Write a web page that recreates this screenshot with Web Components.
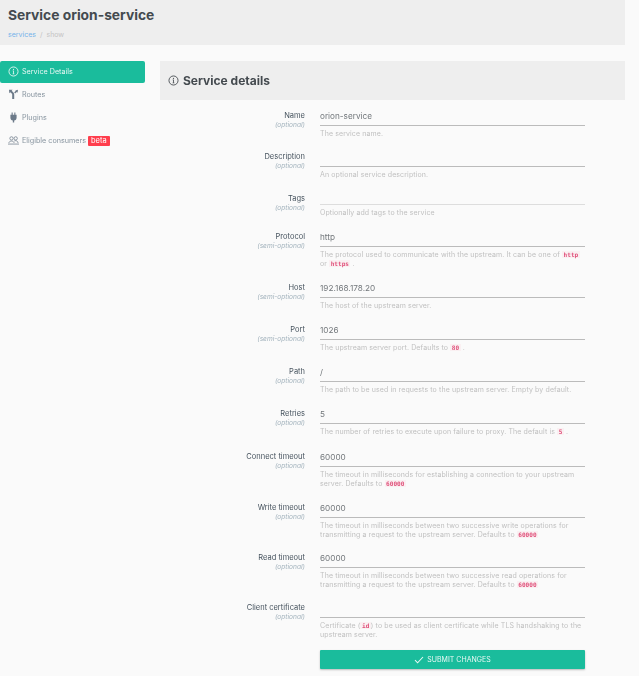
<!DOCTYPE html>
<html>
<head>
<meta charset="utf-8">
<style>
  html, body { margin: 0; padding: 0; height: 676px; overflow: hidden; background: #fafafa; }
  body { font-family: "Inter", "Open Sans", sans-serif; }
</style>
</head>
<body>
<svc-page></svc-page>
<script>
const FIELDS = [
  { label: 'Name', hint: 'optional', value: 'orion-service', help: 'The service name.', h: 41 },
  { label: 'Description', hint: 'optional', value: '', help: 'An optional service description.', h: 42 },
  { label: 'Tags', hint: 'optional', value: '', help: 'Optionally add tags to the service', h: 38, short: true },
  { label: 'Protocol', hint: 'semi-optional', value: 'http', help: 'The protocol used to communicate with the upstream. It can be one of <code>http</code> or <code>https</code> .', h: 51 },
  { label: 'Host', hint: 'semi-optional', value: '192.168.178.20', help: 'The host of the upstream server.', h: 42 },
  { label: 'Port', hint: 'semi-optional', value: '1026', help: 'The upstream server port. Defaults to <code>80</code> .', h: 42 },
  { label: 'Path', hint: 'optional', value: '/', help: 'The path to be used in requests to the upstream server. Empty by default.', h: 42 },
  { label: 'Retries', hint: 'optional', value: '5', help: 'The number of retries to execute upon failure to proxy. The default is <code>5</code> .', h: 43 },
  { label: 'Connect timeout', hint: 'optional', value: '60000', help: 'The timeout in milliseconds for establishing a connection to your upstream server. Defaults to <code>60000</code>', h: 51 },
  { label: 'Write timeout', hint: 'optional', value: '60000', help: 'The timeout in milliseconds between two successive write operations for transmitting a request to the upstream server. Defaults to <code>60000</code>', h: 50 },
  { label: 'Read timeout', hint: 'optional', value: '60000', help: 'The timeout in milliseconds between two successive read operations for transmitting a request to the upstream server. Defaults to <code>60000</code>', h: 50 },
  { label: 'Client certificate', hint: 'optional', value: '', help: 'Certificate (<code>id</code>) to be used as client certificate while TLS handshaking to the upstream server.', h: 52 },
];

const INFO = '<svg width="100%" height="100%" viewBox="0 0 16 16" fill="none" stroke="currentColor"><circle cx="8" cy="8" r="6.6" stroke-width="1.3"/><path d="M8 7v4.4M6.8 11.4h2.4M6.9 7H8" stroke-width="1.2"/><circle cx="8" cy="4.8" r=".9" fill="currentColor" stroke="none"/></svg>';

class SvcHeader extends HTMLElement {
  constructor() {
    super();
    this.attachShadow({ mode: 'open' });
    this.shadowRoot.innerHTML = `
      <style>
        :host { display: block; width: 625px; height: 45px; background: #eeeeee; padding: 7px 0 0 8px; box-sizing: border-box; }
        h1 { margin: 0; font-size: 13.8px; line-height: 16px; font-weight: 700; color: #444a4f; }
        .crumbs { margin-top: 7px; font-size: 7px; line-height: 10px; color: #c4c4c4; }
        .crumbs a { color: #74b3ea; }
        .crumbs i { font-style: normal; margin: 0 4px; }
      </style>
      <h1><slot></slot></h1>
      <div class="crumbs"><a>services</a><i>/</i>show</div>
    `;
  }
}

class SvcNavItem extends HTMLElement {
  constructor() {
    super();
    this.attachShadow({ mode: 'open' });
    this.shadowRoot.innerHTML = `
      <style>
        :host { display: flex; align-items: center; height: 22px; box-sizing: border-box; padding: 0 0 1px 8px; margin-bottom: 1px; font-size: 7.2px; color: #87949f; border-radius: 2px; }
        :host([active]) { background: #1abc9c; color: #e8f8f4; }
        .ic { width: 11px; height: 11px; margin-right: 3px; display: flex; }
        .badge { background: #ff3e4d; color: #fff; border-radius: 1px; padding: 0 3px; margin-left: 2px; line-height: 10px; height: 10px; font-size: 7.5px; }
        .badge:empty { display: none; }
      </style>
      <span class="ic"><slot name="icon"></slot></span>
      <slot></slot>
      <span class="badge">${this.getAttribute('badge') || ''}</span>
    `;
  }
}

class SvcSidebar extends HTMLElement {
  constructor() {
    super();
    this.attachShadow({ mode: 'open' });
    this.shadowRoot.innerHTML = `
      <style>
        :host { display: block; width: 145px; flex: none; }
      </style>
      <slot></slot>
    `;
  }
}

class SvcField extends HTMLElement {
  connectedCallback() {
    if (this.shadowRoot) return;
    this.attachShadow({ mode: 'open' });
    const f = this.field;
    this.shadowRoot.innerHTML = `
      <style>
        :host { display: flex; height: ${f.h}px; }
        .left { width: 145px; text-align: right; padding-top: 5px; }
        .label { font-size: 7.5px; line-height: 10px; color: #46535e; }
        .hint { font-size: 6.6px; line-height: 9px; color: #a3b3bd; font-style: italic; }
        .right { width: 265px; margin-left: 15px; }
        .input { height: ${f.short ? 16 : 20}px; box-sizing: border-box; border-bottom: 1px solid ${f.short ? '#dddddd' : '#bbbbbb'}; padding-top: 5px; font-size: 8.2px; line-height: 10px; color: #72777b; }
        .help { margin-top: 3px; font-size: 7px; letter-spacing: .11px; line-height: 9px; color: #c0c0c0; }
        code { font-family: "DejaVu Sans Mono", monospace; font-size: 6.1px; letter-spacing: 0; color: #e0507a; background: #faf0f2; padding: 0 1.5px; font-weight: 700; }
      </style>
      <div class="left">
        <div class="label">${f.label}</div>
        <div class="hint">(${f.hint})</div>
      </div>
      <div class="right">
        <div class="input">${f.value}</div>
        <div class="help">${f.help}</div>
      </div>
    `;
  }
}

class SvcForm extends HTMLElement {
  constructor() {
    super();
    this.attachShadow({ mode: 'open' });
    this.shadowRoot.innerHTML = `
      <style>
        :host { display: block; width: 465px; flex: none; margin-left: 15px; }
        .head { height: 39px; background: #eeeeee; display: flex; align-items: center; padding-left: 8px; font-size: 12px; font-weight: 700; color: #444a4f; }
        .head span { width: 11px; height: 11px; margin-right: 4px; display: flex; }
        .fields { padding-top: 6px; }
        button { display: flex; align-items: center; justify-content: center; gap: 3px; width: 265px; height: 19px; margin: 0 0 0 160px; padding: 0; border: 0; border-radius: 1px; background: #1abc9c; color: #e8f8f4; font: inherit; font-size: 7px; box-shadow: 0 1px 2px rgba(0,0,0,.25); }
      </style>
      <div class="head"><span>${INFO}</span>Service details</div>
      <div class="fields"></div>
      <button>
        <svg width="10" height="8" viewBox="0 0 10 8" fill="none" stroke="currentColor" stroke-width="1.1"><path d="M1 4.2l2.6 2.6L9 1"/></svg>
        SUBMIT CHANGES
      </button>
    `;
    const holder = this.shadowRoot.querySelector('.fields');
    FIELDS.forEach((f) => {
      const el = document.createElement('svc-field');
      el.field = f;
      holder.appendChild(el);
    });
  }
}

class SvcPage extends HTMLElement {
  constructor() {
    super();
    this.attachShadow({ mode: 'open' });
    this.shadowRoot.innerHTML = `
      <style>
        :host { display: block; will-change: opacity; }
        .main { display: flex; padding-top: 16px; }
      </style>
      <svc-header>Service orion-service</svc-header>
      <div class="main">
        <svc-sidebar>
          <svc-nav-item active>
            <span slot="icon" style="display:flex;width:11px;height:11px">${INFO}</span>Service Details
          </svc-nav-item>
          <svc-nav-item>
            <svg slot="icon" width="11" height="11" viewBox="0 0 11 11" fill="#6c7a89"><path d="M1 .8h3.6L3.7 1.8 5.2 3.3c.7.7 1 1.3 1 2.2V10H4.2V5.8c0-.5-.2-.9-.5-1.2L2.3 3.2l-1 1zM7.2 1.4 10 .8l-.5 2.9-.8-.8-1.6 1.6-.9-1 1.6-1.7z"/></svg>Routes
          </svc-nav-item>
          <svc-nav-item>
            <svg slot="icon" width="11" height="11" viewBox="0 0 11 11" fill="#6c7a89"><path d="M3.6 .6h1.1v2.2h1.6V.6h1.1v2.2h1.2v3c0 1.6-1 2.6-2.4 2.8V10.6H4.8V8.6C3.4 8.4 2.4 7.4 2.4 5.8v-3h1.2z"/></svg>Plugins
          </svc-nav-item>
          <svc-nav-item badge="beta">
            <svg slot="icon" width="12" height="11" viewBox="0 0 12 11" fill="none" stroke="#6c7a89" stroke-width=".8"><circle cx="3.8" cy="3.2" r="1.8"/><circle cx="8.4" cy="3.2" r="1.8"/><path d="M1 8.2c0-2.8 5.6-2.8 5.6 0M6.8 6c1.8-.9 4.2.2 4.2 2.2M0 9.4h12"/></svg>Eligible consumers
          </svc-nav-item>
        </svc-sidebar>
        <svc-form></svc-form>
      </div>
    `;
  }
}

customElements.define('svc-header', SvcHeader);
customElements.define('svc-nav-item', SvcNavItem);
customElements.define('svc-sidebar', SvcSidebar);
customElements.define('svc-field', SvcField);
customElements.define('svc-form', SvcForm);
customElements.define('svc-page', SvcPage);
</script>
</body>
</html>
